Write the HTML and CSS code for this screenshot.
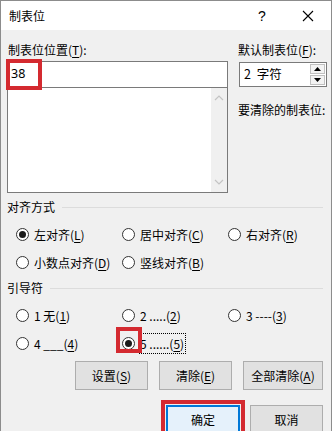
FILE: index.html
```html
<!DOCTYPE html>
<html>
<head>
<meta charset="utf-8">
<link rel="stylesheet" href="styles.css">
</head>
<body>
<div class="dialog">
  <div class="titlebar">
    <div class="title">制表位</div>
    <div class="tbtn">?</div>
    <div class="tbtn">
      <svg width="12" height="12" viewBox="0 0 12 12"><path d="M1 1 L11 11 M11 1 L1 11" stroke="#000" stroke-width="1.1" fill="none"/></svg>
    </div>
  </div>

  <div class="top">
    <div class="leftcol">
      <div class="label">制表位位置(<u>T</u>):</div>
      <div class="input">38</div>
      <div class="list">
        <div class="scroll">
          <svg width="10" height="6" viewBox="0 0 10 6"><path d="M1 5 L5 1 L9 5" stroke="#c4c4c4" stroke-width="1.2" fill="none"/></svg>
          <svg width="10" height="6" viewBox="0 0 10 6"><path d="M1 1 L5 5 L9 1" stroke="#c4c4c4" stroke-width="1.2" fill="none"/></svg>
        </div>
      </div>
    </div>
    <div class="rightcol">
      <div class="label">默认制表位(<u>F</u>):</div>
      <div class="spin">
        <div class="spinval">2 字符</div>
        <div class="spinbtns">
          <div class="sb"><svg width="7" height="4" viewBox="0 0 7 4"><path d="M0 4 L3.5 0 L7 4 Z" fill="#000"/></svg></div>
          <div class="sb"><svg width="7" height="4" viewBox="0 0 7 4"><path d="M0 0 L3.5 4 L7 0 Z" fill="#000"/></svg></div>
        </div>
      </div>
      <div class="label clear">要清除的制表位:</div>
    </div>
  </div>

  <div class="group first"><span>对齐方式</span><i class="line"></i></div>
  <div class="radios">
    <div class="opt"><span class="radio on"></span>左对齐(<u>L</u>)</div>
    <div class="opt"><span class="radio"></span>居中对齐(<u>C</u>)</div>
    <div class="opt"><span class="radio"></span>右对齐(<u>R</u>)</div>
    <div class="opt"><span class="radio"></span>小数点对齐(<u>D</u>)</div>
    <div class="opt"><span class="radio"></span>竖线对齐(<u>B</u>)</div>
  </div>

  <div class="group"><span>引导符</span><i class="line"></i></div>
  <div class="radios">
    <div class="opt"><span class="radio"></span>1 无(<u>1</u>)</div>
    <div class="opt"><span class="radio"></span>2 .....(<u>2</u>)</div>
    <div class="opt"><span class="radio"></span>3 ----(<u>3</u>)</div>
    <div class="opt"><span class="radio"></span>4 ___(<u>4</u>)</div>
    <div class="opt"><span class="radio on"></span><span class="focus">5 ......(<u>5</u>)</span></div>
  </div>

  <div class="btnrow">
    <div class="btn">设置(<u>S</u>)</div>
    <div class="btn">清除(<u>E</u>)</div>
    <div class="btn wide">全部清除(<u>A</u>)</div>
  </div>

  <div class="okrow">
    <div class="btn ok">确定</div>
    <div class="btn">取消</div>
  </div>

  <div class="mark mark-input"></div>
  <div class="mark mark-radio"></div>
</div>
</body>
</html>
```

FILE: styles.css
```css
body {
  margin: 0;
  font-family: "Noto Sans CJK SC", "Noto Sans", sans-serif;
  font-size: 12px;
  color: #000;
}
u { text-decoration: underline; text-underline-offset: 2px; }

.dialog {
  width: 332px;
  height: 431px;
  box-sizing: border-box;
  border: 1px solid #8c8c8c;
  border-bottom: none;
  background: #f0f0f0;
  overflow: hidden;
  position: relative;
}

.titlebar {
  height: 29px;
  background: #fff;
  display: flex;
  align-items: center;
  padding-left: 8px;
}
.title { flex: 1; line-height: 16px; }
.tbtn {
  width: 46px;
  height: 29px;
  display: flex;
  align-items: center;
  justify-content: center;
  font-family: "Liberation Sans", sans-serif;
  font-size: 14px;
}

.top {
  display: flex;
  padding-left: 6px;
}
.leftcol { width: 221px; }
.rightcol { width: 89px; margin-left: 10px; }
.label {
  line-height: 16px;
  margin-top: 12px;
  padding-left: 1px;
  white-space: nowrap;
}
.rightcol .label { padding-left: 0; }
.input {
  margin-top: 3px;
  height: 27px;
  box-sizing: border-box;
  border: 1px solid #7a7a7a;
  background: #fff;
  line-height: 24px;
  padding-left: 3px;
  font-family: "Noto Sans", sans-serif;
  font-size: 12.5px;
}
.list {
  height: 105px;
  box-sizing: border-box;
  border: 1px solid #7a7a7a;
  border-top: none;
  background: #fff;
  display: flex;
  justify-content: flex-end;
}
.scroll {
  width: 16px;
  background: #f0f0f0;
  display: flex;
  flex-direction: column;
  justify-content: space-between;
  align-items: center;
  padding: 7px 0 7px;
}

.spin {
  margin-top: 4px;
  margin-left: 1px;
  height: 25px;
  box-sizing: border-box;
  border: 1px solid #7a7a7a;
  background: #fff;
  display: flex;
}
.spinval {
  flex: 1;
  line-height: 22px;
  padding-left: 4px;
  font-size: 12.5px;
  word-spacing: 3px;
}
.spinbtns {
  width: 15px;
  display: flex;
  flex-direction: column;
  padding: 1px 1px 1px 0;
  gap: 1px;
}
.sb {
  flex: 1;
  border: 1px solid #c0c0c0;
  background: #f3f3f3;
  display: flex;
  align-items: center;
  justify-content: center;
}
.clear { margin-top: 15px; }

.group {
  display: flex;
  align-items: center;
  line-height: 16px;
  margin-top: 4px;
  padding-left: 6px;
  padding-right: 8px;
}
.group.first { margin-top: 6px; }
.group .line {
  flex: 1;
  height: 1px;
  background: #dcdcdc;
  margin-left: 7px;
}

.radios {
  display: grid;
  grid-template-columns: 106px 106px 1fr;
  grid-auto-rows: 28px;
  padding-left: 15px;
  margin-top: 5px;
}
.opt {
  display: flex;
  align-items: center;
  white-space: nowrap;
}
.radio {
  width: 13px;
  height: 13px;
  box-sizing: border-box;
  border: 1px solid #333;
  border-radius: 50%;
  background: #fff;
  margin-right: 5px;
  display: flex;
  align-items: center;
  justify-content: center;
  flex: none;
}
.radio.on::after {
  content: "";
  width: 7px;
  height: 7px;
  border-radius: 50%;
  background: #1a1a1a;
}
.focus {
  outline: 1px dotted #000;
  outline-offset: 0;
  padding: 1px 1px 1px 0;
  line-height: 17px;
}

.btnrow {
  display: flex;
  justify-content: flex-end;
  gap: 11px;
  padding-right: 8px;
  margin-top: 4px;
}
.btn {
  width: 73px;
  height: 29px;
  box-sizing: border-box;
  border: 1px solid #adadad;
  background: #e1e1e1;
  display: flex;
  align-items: center;
  justify-content: center;
}
.btn.wide { width: 80px; }

.okrow {
  display: flex;
  justify-content: flex-end;
  gap: 10px;
  padding-right: 8px;
  margin-top: 15px;
}
.btn.ok {
  width: 74px;
  border: 2px solid #0078d7;
  background: #e5f1fb;
  outline: 4px solid #d42a30;
  outline-offset: 1px;
}

.mark {
  position: absolute;
  box-sizing: border-box;
  border: 4px solid #d42a30;
}
.mark-input { left: 5px; top: 58px; width: 36px; height: 31px; }
.mark-radio { left: 115px; top: 326px; width: 26px; height: 26px; }
```
